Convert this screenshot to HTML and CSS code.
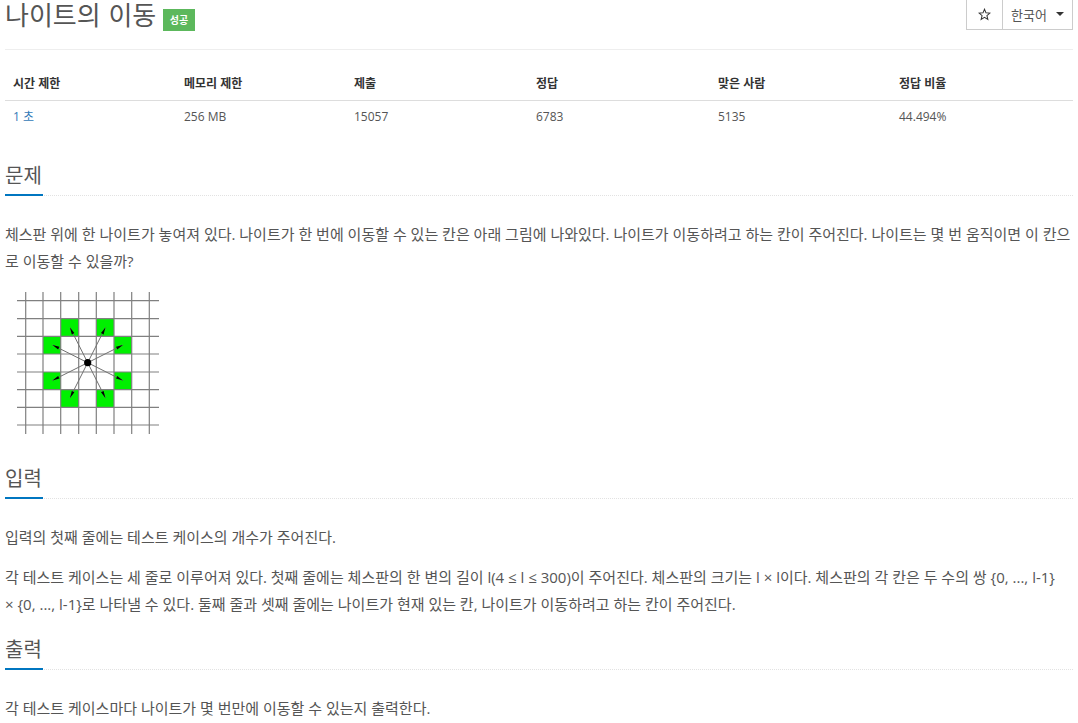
FILE: index.html
```html
<!DOCTYPE html>
<html lang="ko">
<head>
<meta charset="utf-8">
<title>나이트의 이동</title>
<link rel="stylesheet" href="styles.css">
</head>
<body>
<main class="page">
  <header class="page-header">
    <div class="btn-group">
      <button class="btn btn-star" type="button" aria-label="star">
        <svg class="star" viewBox="0 0 14 14" width="13" height="13"><path d="M7 1.3 8.6 5.2 12.8 5.5 9.6 8.2 10.6 12.3 7 10.1 3.4 12.3 4.4 8.2 1.2 5.5 5.4 5.2Z" fill="none" stroke="#333" stroke-width="1.1"/></svg>
      </button>
      <button class="btn btn-lang" type="button"><span class="lang-text">한국어</span><span class="caret"></span></button>
    </div>
    <h1 class="title">나이트의 이동 <span class="label">성공</span></h1>
  </header>

  <table class="info">
    <thead>
      <tr><th class="c1">시간 제한</th><th class="c2">메모리 제한</th><th class="c3">제출</th><th class="c3">정답</th><th class="c4">맞은 사람</th><th class="c3">정답 비율</th></tr>
    </thead>
    <tbody>
      <tr><td><a class="link" href="#">1 초</a></td><td>256 MB</td><td>15057</td><td>6783</td><td>5135</td><td>44.494%</td></tr>
    </tbody>
  </table>

  <section class="section section-problem">
    <div class="headline"><h2>문제</h2></div>
    <p>체스판 위에 한 나이트가 놓여져 있다. 나이트가 한 번에 이동할 수 있는 칸은 아래 그림에 나와있다. 나이트가 이동하려고 하는 칸이 주어진다. 나이트는 몇 번 움직이면 이 칸으로 이동할 수 있을까?</p>
    <svg class="figure" viewBox="0 0 142 142" width="142" height="142">
      <g fill="#00f000">
        <rect x="44" y="26.7" width="18" height="17.6"/><rect x="79.3" y="26.7" width="17.7" height="17.6"/>
        <rect x="26" y="44.3" width="18" height="17.7"/><rect x="97" y="44.3" width="17.7" height="17.7"/>
        <rect x="26" y="80" width="18" height="17.7"/><rect x="97" y="80" width="17.7" height="17.7"/>
        <rect x="44" y="97.7" width="18" height="17.6"/><rect x="79.3" y="97.7" width="17.7" height="17.6"/>
      </g>
      <g stroke="#808080" stroke-width="1.2">
        <path d="M8.7 0V142M26 0V142M43.7 0V142M61.7 0V142M79.3 0V142M97 0V142M114.7 0V142M132.3 0V142"/>
        <path d="M0 8.7H142M0 26.7H142M0 44.3H142M0 62H142M0 80H142M0 97.7H142M0 115.3H142M0 133H142"/>
      </g>
      <g transform="translate(70.7 70.7)">
        <path stroke="#707070" stroke-width="1" d="M0 0-17.7-35.2M0 0 17.7-35.2M0 0-17.7 35.2M0 0 17.7 35.2M0 0-35.2-17.7M0 0 35.2-17.7M0 0-35.2 17.7M0 0 35.2 17.7"/>
        <path fill="#000" d="M-17.7-35.2-13.3-29.6-15.9-28.3ZM17.7-35.2 13.3-29.6 15.9-28.3ZM-17.7 35.2-13.3 29.6-15.9 28.3ZM17.7 35.2 13.3 29.6 15.9 28.3ZM-35.2-17.7-29.6-13.3-28.3-15.9ZM35.2-17.7 29.6-13.3 28.3-15.9ZM-35.2 17.7-29.6 13.3-28.3 15.9ZM35.2 17.7 29.6 13.3 28.3 15.9Z"/>
        <circle r="3.6" fill="#000"/>
      </g>
    </svg>
  </section>

  <section class="section section-input">
    <div class="headline"><h2>입력</h2></div>
    <p>입력의 첫째 줄에는 테스트 케이스의 개수가 주어진다.</p>
    <p>각 테스트 케이스는 세 줄로 이루어져 있다. 첫째 줄에는 체스판의 한 변의 길이 l(4 ≤ l ≤ 300)이 주어진다. 체스판의 크기는 l × l이다. 체스판의 각 칸은 두 수의 쌍 {0, ..., l-1} ×&nbsp;{0, ..., l-1}로 나타낼 수 있다. 둘째 줄과 셋째 줄에는 나이트가 현재 있는 칸, 나이트가 이동하려고 하는 칸이 주어진다.</p>
  </section>

  <section class="section section-output">
    <div class="headline"><h2>출력</h2></div>
    <p>각 테스트 케이스마다 나이트가 몇 번만에 이동할 수 있는지 출력한다.</p>
  </section>
</main>
</body>
</html>
```
FILE: styles.css
```css
* { box-sizing: border-box; }
html, body { margin: 0; padding: 0; height: 723px; overflow: hidden; background: #fff; }
body {
  font-family: "Open Sans", "Noto Sans CJK KR", sans-serif;
  font-size: 13px;
  line-height: 1.43;
  color: #555;
}
.page { width: 1078px; padding: 0 5px; }
.page-header { height: 50px; border-bottom: 1px solid #eee; }
.title {
  margin: 0;
  font-size: 26px;
  font-weight: 400;
  line-height: 30px;
  color: #555;
  word-spacing: 1px;
}
.label {
  display: inline-block;
  vertical-align: 1px;
  margin-left: -1px;
  width: 32px;
  text-align: center;
  height: 22px;
  line-height: 22px;
  background: #5cb85c;
  color: #fff;
  font-size: 10px;
  font-weight: 700;
  word-spacing: 0;
}
.btn-group { float: right; display: flex; margin-top: -2px; }
.btn {
  height: 32px;
  background: #fff;
  border: 1px solid #ccc;
  font: inherit;
  color: #555;
  padding: 0;
  display: flex;
  align-items: center;
  justify-content: center;
}
.btn-star { width: 37px; }
.btn-lang { width: 71px; margin-left: -1px; }
.lang-text { font-size: 13px; line-height: 20px; padding-top: 2px; }
.caret {
  margin-left: 9px;
  border-top: 4px solid #333;
  border-left: 4px solid transparent;
  border-right: 4px solid transparent;
}
.info { width: 1068px; margin: 18px 0 32px; border-collapse: collapse; table-layout: fixed; font-size: 12px; }
.info th {
  height: 32px;
  padding: 7px 8px;
  text-align: left;
  font-weight: 700;
  color: #333;
  border-bottom: 1px solid #ddd;
}
.info td { height: 32px; padding: 6px 8px; }
.c1 { width: 171px; }
.c2 { width: 170px; }
.c3 { width: 182px; }
.c4 { width: 181px; }
.link { color: #337ab7; text-decoration: none; }
.section { margin-top: 20px; }
.headline { height: 32px; border-bottom: 1px dotted #e2e2e2; }
.headline h2 {
  display: inline-block;
  margin: 0;
  height: 32px;
  font-size: 20px;
  font-weight: 400;
  line-height: 24px;
  color: #555;
  border-bottom: 2px solid #0076c0;
  padding-right: 1px;
}
.section p { margin: 0 0 13px; line-height: 27px; font-size: 15px; }
.headline + p { margin-top: 25px; }
.figure { display: block; margin: 17px 0 33px 12px; filter: blur(0.35px); }
```
